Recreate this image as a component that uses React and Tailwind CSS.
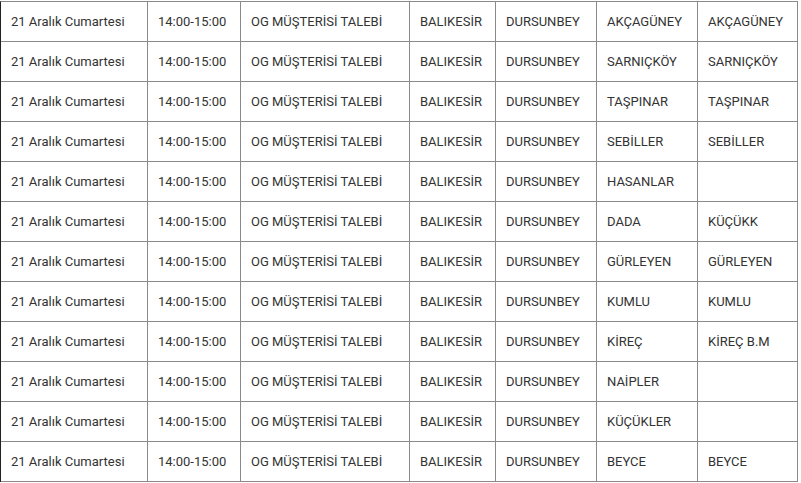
import React from 'react';

const rows = [
  ['AKÇAGÜNEY', 'AKÇAGÜNEY'],
  ['SARNIÇKÖY', 'SARNIÇKÖY'],
  ['TAŞPINAR', 'TAŞPINAR'],
  ['SEBİLLER', 'SEBİLLER'],
  ['HASANLAR', ''],
  ['DADA', 'KÜÇÜKK'],
  ['GÜRLEYEN', 'GÜRLEYEN'],
  ['KUMLU', 'KUMLU'],
  ['KİREÇ', 'KİREÇ B.M'],
  ['NAİPLER', ''],
  ['KÜÇÜKLER', ''],
  ['BEYCE', 'BEYCE'],
];

const Cell = ({ children }) => (
  <div className="h-10 flex items-center pl-[10px] border-r border-b border-[#8a8a8a] whitespace-nowrap overflow-hidden">
    {children}
  </div>
);

const App = () => {
  return (
    <div
      className="w-[801px] h-[483px] bg-white overflow-hidden pt-px text-[13px] text-[#333]"
      style={{ fontFamily: 'Roboto, "Liberation Sans", sans-serif' }}
    >
      <div className="grid grid-cols-[147px_93px_169px_86px_101px_101px_100px] w-[798px] border-l border-t border-l-[#222] border-t-[#8a8a8a]">
        {rows.map(([mahalle, sokak], i) => (
          <React.Fragment key={i}>
            <Cell>21 Aralık Cumartesi</Cell>
            <Cell>14:00-15:00</Cell>
            <Cell>OG MÜŞTERİSİ TALEBİ</Cell>
            <Cell>BALIKESİR</Cell>
            <Cell>DURSUNBEY</Cell>
            <Cell>{mahalle}</Cell>
            <Cell>{sokak}</Cell>
          </React.Fragment>
        ))}
      </div>
    </div>
  );
};

export default App;
